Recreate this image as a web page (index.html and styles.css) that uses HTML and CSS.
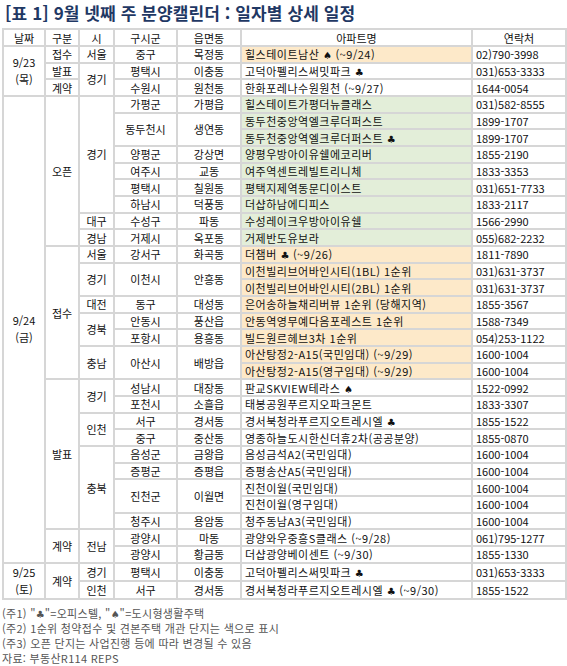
FILE: index.html
```html
<!DOCTYPE html>
<html lang="ko">
<head>
<meta charset="utf-8">
<link rel="stylesheet" href="styles.css">
</head>
<body>
<div class="page">
<h1 class="title">[표 1] 9월 넷째 주 분양캘린더 : 일자별 상세 일정</h1>
<table class="cal">
<colgroup>
<col class="c-date"><col class="c-type"><col class="c-si"><col class="c-gu"><col class="c-dong"><col class="c-apt"><col class="c-tel">
</colgroup>
<thead>
<tr><th>날짜</th><th>구분</th><th>시</th><th>구시군</th><th>읍면동</th><th>아파트명</th><th>연락처</th></tr>
</thead>
<tbody>
<tr><td class="date" rowspan="3">9/23<br>(목)</td><td>접수</td><td>서울</td><td>중구</td><td>목정동</td><td class="apt or">힐스테이트남산 <span class="sym">♠</span> (~9/24)</td><td class="tel">02)790-3998</td></tr>
<tr><td>발표</td><td rowspan="2">경기</td><td>평택시</td><td>이충동</td><td class="apt">고덕아펠리스써밋파크 <span class="sym">♣</span></td><td class="tel">031)653-3333</td></tr>
<tr><td>계약</td><td>수원시</td><td>원천동</td><td class="apt">한화포레나수원원천 (~9/27)</td><td class="tel">1644-0054</td></tr>

<tr><td class="date" rowspan="28">9/24<br>(금)</td><td rowspan="9">오픈</td><td rowspan="7">경기</td><td>가평군</td><td>가평읍</td><td class="apt gr">힐스테이트가평더뉴클래스</td><td class="tel">031)582-8555</td></tr>
<tr><td rowspan="2">동두천시</td><td rowspan="2">생연동</td><td class="apt gr">동두천중앙역엘크루더퍼스트</td><td class="tel">1899-1707</td></tr>
<tr><td class="apt gr">동두천중앙역엘크루더퍼스트 <span class="sym">♣</span></td><td class="tel">1899-1707</td></tr>
<tr><td>양평군</td><td>강상면</td><td class="apt gr">양평우방아이유쉘에코리버</td><td class="tel">1855-2190</td></tr>
<tr><td>여주시</td><td>교동</td><td class="apt gr">여주역센트레빌트리니체</td><td class="tel">1833-3353</td></tr>
<tr><td>평택시</td><td>칠원동</td><td class="apt gr">평택지제역동문디이스트</td><td class="tel">031)651-7733</td></tr>
<tr><td>하남시</td><td>덕풍동</td><td class="apt gr">더샵하남에디피스</td><td class="tel">1833-2117</td></tr>
<tr><td>대구</td><td>수성구</td><td>파동</td><td class="apt gr">수성레이크우방아이유쉘</td><td class="tel">1566-2990</td></tr>
<tr><td>경남</td><td>거제시</td><td>옥포동</td><td class="apt gr">거제반도유보라</td><td class="tel">055)682-2232</td></tr>

<tr><td rowspan="8">접수</td><td>서울</td><td>강서구</td><td>화곡동</td><td class="apt or">더챔버 <span class="sym">♣</span> (~9/26)</td><td class="tel">1811-7890</td></tr>
<tr><td rowspan="2">경기</td><td rowspan="2">이천시</td><td rowspan="2">안흥동</td><td class="apt or">이천빌리브어바인시티(1BL) 1순위</td><td class="tel">031)631-3737</td></tr>
<tr><td class="apt or">이천빌리브어바인시티(2BL) 1순위</td><td class="tel">031)631-3737</td></tr>
<tr><td>대전</td><td>동구</td><td>대성동</td><td class="apt or">은어송하늘채리버뷰 1순위 (당해지역)</td><td class="tel">1855-3567</td></tr>
<tr><td rowspan="2">경북</td><td>안동시</td><td>풍산읍</td><td class="apt or">안동역영무예다음포레스트 1순위</td><td class="tel">1588-7349</td></tr>
<tr><td>포항시</td><td>용흥동</td><td class="apt or">빌드원르헤브3차 1순위</td><td class="tel">054)253-1122</td></tr>
<tr><td rowspan="2">충남</td><td rowspan="2">아산시</td><td rowspan="2">배방읍</td><td class="apt or">아산탕정2-A15(국민임대) (~9/29)</td><td class="tel">1600-1004</td></tr>
<tr><td class="apt or">아산탕정2-A15(영구임대) (~9/29)</td><td class="tel">1600-1004</td></tr>

<tr><td rowspan="9">발표</td><td rowspan="2">경기</td><td>성남시</td><td>대장동</td><td class="apt">판교SKVIEW테라스 <span class="sym">♠</span></td><td class="tel">1522-0992</td></tr>
<tr><td>포천시</td><td>소흘읍</td><td class="apt">태봉공원푸르지오파크몬트</td><td class="tel">1833-3307</td></tr>
<tr><td rowspan="2">인천</td><td>서구</td><td>경서동</td><td class="apt">경서북청라푸르지오트레시엘 <span class="sym">♣</span></td><td class="tel">1855-1522</td></tr>
<tr><td>중구</td><td>중산동</td><td class="apt">영종하늘도시한신더휴2차(공공분양)</td><td class="tel">1855-0870</td></tr>
<tr><td rowspan="5">충북</td><td>음성군</td><td>금왕읍</td><td class="apt">음성금석A2(국민임대)</td><td class="tel">1600-1004</td></tr>
<tr><td>증평군</td><td>증평읍</td><td class="apt">증평송산A5(국민임대)</td><td class="tel">1600-1004</td></tr>
<tr><td rowspan="2">진천군</td><td rowspan="2">이월면</td><td class="apt">진천이월(국민임대)</td><td class="tel">1600-1004</td></tr>
<tr><td class="apt">진천이월(영구임대)</td><td class="tel">1600-1004</td></tr>
<tr><td>청주시</td><td>용암동</td><td class="apt">청주동남A3(국민임대)</td><td class="tel">1600-1004</td></tr>

<tr><td rowspan="2">계약</td><td rowspan="2">전남</td><td>광양시</td><td>마동</td><td class="apt">광양와우중흥S클래스 (~9/28)</td><td class="tel">061)795-1277</td></tr>
<tr><td>광양시</td><td>황금동</td><td class="apt">더샵광양베이센트 (~9/30)</td><td class="tel">1855-1330</td></tr>

<tr><td class="date" rowspan="2">9/25<br>(토)</td><td rowspan="2">계약</td><td>경기</td><td>평택시</td><td>이충동</td><td class="apt">고덕아펠리스써밋파크 <span class="sym">♣</span></td><td class="tel">031)653-3333</td></tr>
<tr><td>인천</td><td>서구</td><td>경서동</td><td class="apt">경서북청라푸르지오트레시엘 <span class="sym">♣</span> (~9/30)</td><td class="tel">1855-1522</td></tr>
</tbody>
</table>
<div class="notes">
<p>(주1) "<span class="sym">♣</span>"=오피스텔, "<span class="sym">♠</span>"=도시형생활주택</p>
<p>(주2) 1순위 청약접수 및 견본주택 개관 단지는 색으로 표시</p>
<p>(주3) 오픈 단지는 사업진행 등에 따라 변경될 수 있음</p>
<p>자료: 부동산R114 REPS</p>
</div>
</div>
</body>
</html>
```

FILE: styles.css
```css
html, body {
  margin: 0;
  padding: 0;
  background: #ffffff;
}
body {
  font-family: "Noto Sans CJK KR", "Noto Sans", sans-serif;
  color: #111;
}
.page {
  padding: 0 2px;
}
.title {
  margin: 0;
  padding: 2px 0 0 3px;
  height: 28px;
  box-sizing: border-box;
  font-size: 17px;
  line-height: 22px;
  font-weight: 700;
  color: #1f3864;
  letter-spacing: 0.1px;
}
.cal {
  border-collapse: collapse;
  table-layout: fixed;
  width: 563px;
  font-size: 11px;
}
.c-date { width: 42px; }
.c-type { width: 34px; }
.c-si { width: 35px; }
.c-gu { width: 63px; }
.c-dong { width: 64px; }
.c-apt { width: 231px; }
.c-tel { width: 94px; }
.cal th, .cal td {
  border: 2px solid #d6d6d6;
  padding: 0;
  height: 14.68px;
  line-height: 14px;
  text-align: center;
  white-space: nowrap;
  overflow: hidden;
  font-weight: 400;
}
.cal th {
  height: 15px;
}
.cal td.date {
  line-height: 17px;
}
.cal td.apt, .cal td.tel {
  text-align: left;
  padding-left: 3px;
}
.cal td.apt {
  letter-spacing: 0.5px;
}
.sym {
  font-family: "DejaVu Sans", sans-serif;
  font-size: 10px;
  line-height: 0;
  letter-spacing: 0;
}
.cal td.or { background: #fde9c9; }
.cal td.gr { background: #e3eed9; }
.notes {
  margin-top: 6px;
  font-size: 11px;
  line-height: 15px;
  color: #555;
  letter-spacing: 0.3px;
}
.notes p {
  margin: 0;
}
```
